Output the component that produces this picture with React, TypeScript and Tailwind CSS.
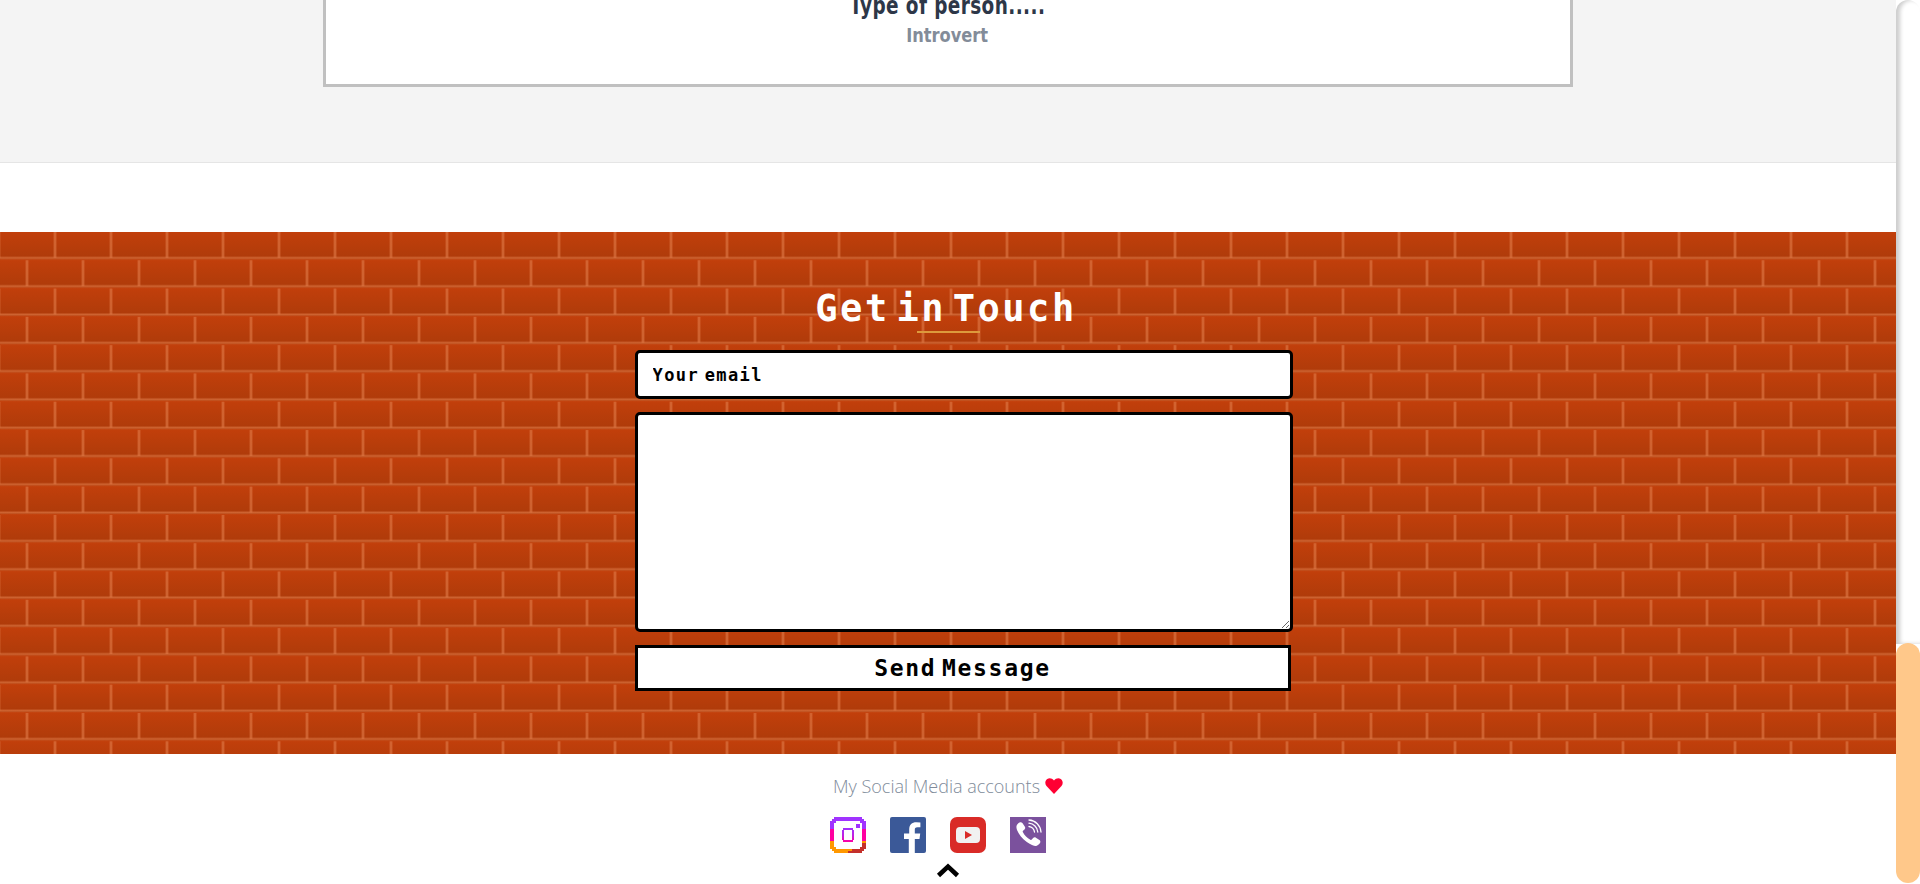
import React from "react";

const Instagram = () => (
  <svg width="36" height="36" viewBox="0 0 36 36" shapeRendering="crispEdges">
    <defs>
      <linearGradient id="ig" x1="0" y1="0" x2="0" y2="1">
        <stop offset="0" stopColor="#a033ff" />
        <stop offset="0.33" stopColor="#a033ff" />
        <stop offset="0.33" stopColor="#ff00a0" />
        <stop offset="0.66" stopColor="#ff00a0" />
        <stop offset="0.66" stopColor="#ff9800" />
        <stop offset="1" stopColor="#ff9800" />
      </linearGradient>
      <linearGradient id="ring" x1="0" y1="0" x2="0" y2="1">
        <stop offset="0" stopColor="#a033ff" />
        <stop offset="0.55" stopColor="#c020e0" />
        <stop offset="1" stopColor="#ff00a0" />
      </linearGradient>
    </defs>
    <path d="M4 0h28v2h2v2h2v28h-2v2h-2v2H4v-2H2v-2H0V4h2V2h2z" fill="url(#ig)" />
    <path d="M36 26v6h-2v2h-2v2H18v-2h4v-2h6v-2h4v-4z" fill="#c4302b" />
    <path d="M6 4h24v2h2v24h-2v2H6v-2H4V6h2z" fill="#fff" />
    <rect x="26" y="7" width="4" height="4" fill="#a033ff" />
    <path d="M13 11h10v2h1v10h-1v2H13v-2h-1V13h1zM14 13v10h8V13z" fill="url(#ring)" fillRule="evenodd" />
  </svg>
);

const Facebook = () => (
  <svg width="36" height="36" viewBox="0 0 36 36">
    <rect width="36" height="36" rx="2" fill="#3b5998" />
    <path d="M24.8 36V22h4.700l.7-5.500h-5.400V13c0-1.600.4-2.700 2.700-2.700h2.900V5.400a39 39 0 0 0-4.200-.2c-4.200 0-7 2.500-7 7.200v4.100H14V22h4.800v14z" fill="#fff" />
  </svg>
);

const Youtube = () => (
  <svg width="36" height="36" viewBox="0 0 36 36">
    <rect width="36" height="36" rx="7" fill="#d92b27" />
    <rect x="6" y="10" width="24" height="16" rx="4" fill="#f1f1f1" />
    <path d="M15 14v8l7-4z" fill="#d92b27" />
  </svg>
);

const Viber = () => (
  <svg width="36" height="36" viewBox="0 0 36 36">
    <rect width="36" height="36" fill="#7b519d" />
    <path d="M9.500 5.500c1-.6 2.200-.4 2.900.6l2.500 3.600c.6.900.4 2-.4 2.700l-1.500 1.300c-.4.400-.5.900-.2 1.400 1.800 3.400 4.300 6 7.600 7.700.5.300 1 .2 1.400-.2l1.300-1.500c.7-.8 1.900-1 2.800-.4l3.500 2.400c1 .7 1.300 2 .6 3-.9 1.300-2.300 2.700-3.900 2.900-1.800.2-5-.8-9.300-4C12 21.400 8.600 17 7 12.900c-.9-2.500-.6-3.900-.2-4.700.5-1.100 1.500-2.100 2.700-2.700z" fill="#fff" />
    <path d="M19 9.500c2.800.3 5.200 2.700 5.500 5.500M19 6.200c4.700.4 8.400 4.100 8.800 8.800M19 3c6.500.4 11.600 5.500 12 12" fill="none" stroke="#fff" strokeWidth="1.300" strokeLinecap="round" />
  </svg>
);

export default function App() {
  return (
    <div className="w-[1920px] h-[884px] overflow-hidden flex bg-white">
      <main className="w-[1896px] flex flex-col">
        <section className="h-[162px] shrink-0 bg-[#f4f4f4] border-b border-[#e5e5e5] box-content flex flex-col items-center">
          <div className="w-[1250px] ml-[-1px] h-[87px] bg-white border-x-[3px] border-b-[3px] border-[#c0c0c0] flex flex-col items-center">
            <h3 className="mt-[-8px] h-[28px] leading-[28px] text-[25px] font-bold text-[#2d3748] tracking-[0.5px] whitespace-nowrap scale-x-[0.82] [font-family:'DejaVu_Sans_Condensed','DejaVu_Sans',sans-serif]">
              Type of person.....
            </h3>
            <p className="mt-[3px] h-[24px] leading-[24px] text-[19px] font-bold text-[#838c99] scale-x-[0.95] [font-family:'DejaVu_Sans_Condensed','DejaVu_Sans',sans-serif]">
              Introvert
            </p>
          </div>
        </section>
        <div className="h-[69px] shrink-0 bg-white" />
        <section className="h-[522px] shrink-0 flex flex-col items-center [background-color:#b83e0a] [background-image:linear-gradient(to_bottom,transparent_24px,rgba(222,120,70,0.35)_25px,rgba(222,120,70,0.7)_26px,rgba(222,120,70,0.35)_27px,transparent_28px),conic-gradient(at_2px_26px,transparent_270deg,rgba(222,120,70,0.5)_270deg),conic-gradient(at_2px_26px,transparent_270deg,rgba(222,120,70,0.5)_270deg),conic-gradient(at_4px_26px,transparent_270deg,rgba(222,120,70,0.25)_270deg),conic-gradient(at_4px_26px,transparent_270deg,rgba(222,120,70,0.25)_270deg),linear-gradient(to_bottom,#c23f0b,#ae3b0a)] [background-size:56px_28.3px,56px_56.6px,56px_56.6px,56px_56.6px,56px_56.6px,100%_28.3px] [background-position:0_0,54px_0,26px_28.300px,53px_0,25px_28.300px,0_-1px]">
          <h2 className="mt-[55px] ml-[-4px] h-[44px] leading-[44px] text-[37px] font-bold text-white tracking-[2.5px] [word-spacing:-18px] whitespace-nowrap [font-family:'DejaVu_Sans_Mono',monospace]">
            Get in Touch
          </h2>
          <div className="w-[63px] h-[2px] mt-[0px] ml-[1px] bg-[#dd9a3c]" />
          <form className="mt-[17px] w-[658px] ml-[31px] flex flex-col items-start">
            <input
              type="text"
              placeholder="Your email"
              className="w-full h-[49px] bg-white border-[3px] border-black rounded-[5px] px-[15px] text-[17px] font-bold text-black placeholder:text-black tracking-[1.4px] [word-spacing:-6px] [font-family:'DejaVu_Sans_Mono',monospace] outline-none"
            />
            <textarea className="mt-[13px] w-full h-[220px] block bg-white border-[3px] border-black rounded-[5px] outline-none" />
            <button
              type="button"
              className="mt-[13px] w-[656px] h-[46px] bg-white border-[3px] border-black text-[23px] font-bold text-black tracking-[1.7px] [word-spacing:-10px] [font-family:'DejaVu_Sans_Mono',monospace]"
            >
              Send Message
            </button>
          </form>
        </section>
        <footer className="flex-1 bg-white flex flex-col items-center">
          <p className="mt-[20px] h-[24px] leading-[24px] flex items-center text-[18px] font-light text-[#808b9a] [font-family:'Open_Sans',sans-serif]">
            My Social Media accounts
            <svg className="ml-[5px]" width="18" height="16" viewBox="0 0 24 21">
              <path d="M12 21 2 10.500C-.5 7.500 0 3 3 1c3-1.800 6.500-1 9 2.200C14.500 0 18-.8 21 1c3 2 3.500 6.500 1 9.500z" fill="#ff0033" />
            </svg>
          </p>
          <div className="mt-[19px] ml-[-20px] flex gap-[24px]">
            <Instagram />
            <Facebook />
            <Youtube />
            <Viber />
          </div>
          <svg className="mt-[10px]" width="24" height="15" viewBox="0 0 24 15">
            <path d="M2.500 12.500 12 3.500l9.500 9" fill="none" stroke="#000" strokeWidth="4.500" />
          </svg>
        </footer>
      </main>
      <aside className="w-[24px] h-[884px] flex flex-col pb-[1px]">
        <div className="flex-1 rounded-t-[12px] bg-white shadow-[inset_4px_0_4px_rgba(0,0,0,0.2)]" />
        <div className="h-[240px] mt-[-1px] rounded-[12px] bg-[#ffc88a]" />
      </aside>
    </div>
  );
}
